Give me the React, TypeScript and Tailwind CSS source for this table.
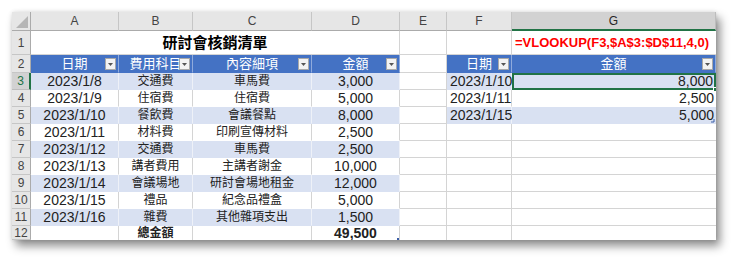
import React from "react";

const rows: string[][] = [
  ["2023/1/8", "交通費", "車馬費", "3,000"],
  ["2023/1/9", "住宿費", "住宿費", "5,000"],
  ["2023/1/10", "餐飲費", "會議餐點", "8,000"],
  ["2023/1/11", "材料費", "印刷宣傳材料", "2,500"],
  ["2023/1/12", "交通費", "車馬費", "2,500"],
  ["2023/1/13", "講者費用", "主講者謝金", "10,000"],
  ["2023/1/14", "會議場地", "研討會場地租金", "12,000"],
  ["2023/1/15", "禮品", "紀念品禮盒", "5,000"],
  ["2023/1/16", "雜費", "其他雜項支出", "1,500"],
];

const lookup: string[][] = [
  ["2023/1/10", "8,000"],
  ["2023/1/11", "2,500"],
  ["2023/1/15", "5,000"],
];

function FilterBtn() {
  return (
    <div className="absolute right-[2px] top-[3px] w-[11px] h-[12px] bg-[#f3f3f3] border border-[#a9a9a9] flex items-center justify-center">
      <svg width="5" height="3" viewBox="0 0 5 3">
        <path d="M0 0 L5 0 L2.5 3 Z" fill="#555" />
      </svg>
    </div>
  );
}

function Hdr({ text }: { text: string }) {
  return (
    <div className="relative flex items-center justify-center bg-[#4472c4] border-r border-b border-r-[#8faadc] border-b-[#4472c4] text-white text-[13px]">
      <span>{text}</span>
      <FilterBtn />
    </div>
  );
}

function RowNum({ n, sel }: { n: number; sel?: boolean }) {
  return (
    <div
      className={
        sel
          ? "flex items-center justify-center bg-[#d2d2d2] border-b border-b-[#bdbdbd] border-r-2 border-r-[#217346] text-[12px] text-[#217346]"
          : "flex items-center justify-center bg-[#e6e6e6] border-b border-r border-b-[#c6c6c6] border-r-[#ababab] text-[12px] text-[#444]"
      }
    >
      {n}
    </div>
  );
}

export default function App() {
  const colHeads = ["A", "B", "C", "D", "E", "F", "G"];
  return (
    <div className="w-[740px] h-[264px] bg-white overflow-hidden pt-[12px] pl-[12px] font-['Liberation_Sans','Noto_Sans_CJK_TC',sans-serif]">
      <div className="w-[704px] h-[228px] shadow-[4px_6px_9px_rgba(0,0,0,0.45),0_0_4px_rgba(0,0,0,0.12)] bg-white">
        <div className="grid grid-cols-[19px_88px_74px_119px_88px_47px_65px_204px] grid-rows-[19px_24px_18px_repeat(9,17px)_14px] overflow-hidden h-[228px] text-[#222]">
          {/* Column header row */}
          <div className="relative bg-[#e6e6e6] border-r border-b border-[#ababab]">
            <svg className="absolute right-[2px] bottom-[2px]" width="12" height="12" viewBox="0 0 12 12">
              <path d="M12 0 L12 12 L0 12 Z" fill="#b5b5b5" />
            </svg>
          </div>
          {colHeads.map((c) =>
            c === "G" ? (
              <div key={c} className="flex items-center justify-center bg-[#d2d2d2] border-r border-r-[#bdbdbd] border-b-2 border-b-[#217346] text-[12px] text-[#262626]">
                {c}
              </div>
            ) : (
              <div key={c} className="flex items-center justify-center bg-[#e6e6e6] border-r border-b border-r-[#c6c6c6] border-b-[#ababab] text-[12px] text-[#444]">
                {c}
              </div>
            )
          )}

          {/* Row 1 */}
          <RowNum n={1} />
          <div className="col-span-4 flex items-center justify-center border-r border-b border-[#d4d4d4] text-[15px] font-bold text-black pt-[2px]">
            研討會核銷清單
          </div>
          <div className="border-r border-b border-[#d4d4d4]" />
          <div className="border-r border-b border-[#d4d4d4]" />
          <div className="flex items-center pl-[3px] border-b border-[#d4d4d4] text-[13px] font-bold text-[#ff0000] whitespace-nowrap overflow-visible">
            =VLOOKUP(F3,$A$3:$D$11,4,0)
          </div>

          {/* Row 2 */}
          <RowNum n={2} />
          <Hdr text="日期" />
          <Hdr text="費用科目" />
          <Hdr text="內容細項" />
          <Hdr text="金額" />
          <div className="border-r border-b border-[#d4d4d4]" />
          <Hdr text="日期" />
          <Hdr text="金額" />

          {/* Data rows 3-11 */}
          {rows.map((r, i) => {
            const band = i % 2 === 0;
            const cell = band
              ? "flex items-center justify-center bg-[#d9e1f2] border-r border-b border-r-[#eef1f8] border-b-[#d9e1f2] whitespace-nowrap"
              : "flex items-center justify-center bg-white border-r border-b border-r-[#d4d4d4] border-b-[#ffffff] whitespace-nowrap";
            const lk = lookup[i];
            const lband = i % 2 === 0;
            return (
              <React.Fragment key={i}>
                <RowNum n={i + 3} sel={i === 0} />
                <div className={cell + " text-[14px]"}>{r[0]}</div>
                <div className={cell + " text-[12px]"}>{r[1]}</div>
                <div className={cell + " text-[12px]"}>{r[2]}</div>
                <div className={cell + " text-[14px]"}>{r[3]}</div>
                <div className="border-r border-b border-[#d4d4d4]" />
                {lk ? (
                  <>
                    <div
                      className={
                        lband
                          ? "flex items-center pl-[3px] bg-[#d9e1f2] border-r border-b border-r-[#eef1f8] border-b-[#d9e1f2] text-[14px] whitespace-nowrap"
                          : "flex items-center pl-[3px] bg-white border-r border-b border-r-[#d4d4d4] border-b-white text-[14px] whitespace-nowrap"
                      }
                    >
                      {lk[0]}
                    </div>
                    {i === 0 ? (
                      <div className="relative flex items-center justify-end pr-[1px] bg-[#d9e1f2] border-2 border-[#217346] text-[14px]">
                        {lk[1]}
                        <div className="absolute right-[-4px] bottom-[-4px] w-[5px] h-[5px] bg-[#217346] border border-white" />
                      </div>
                    ) : (
                      <div
                        className={
                          lband
                            ? "relative flex items-center justify-end pr-[2px] bg-[#d9e1f2] text-[14px]"
                            : "flex items-center justify-end pr-[2px] bg-white text-[14px]"
                        }
                      >
                        {lk[1]}
                        {i === 2 && (
                          <svg className="absolute right-[1px] bottom-[1px]" width="4" height="4" viewBox="0 0 4 4">
                            <path d="M3 0 L3 3 L0 3" stroke="#3b5ea8" strokeWidth="1" fill="none" />
                          </svg>
                        )}
                      </div>
                    )}
                  </>
                ) : (
                  <>
                    <div className="border-r border-b border-[#d4d4d4]" />
                    <div className="border-b border-[#d4d4d4]" />
                  </>
                )}
              </React.Fragment>
            );
          })}

          {/* Row 12 */}
          <RowNum n={12} />
          <div className="border-r border-[#d4d4d4]" />
          <div className="flex items-start justify-center border-r border-[#d4d4d4] text-[12px] font-bold leading-[14px]">總金額</div>
          <div className="border-r border-[#d4d4d4]" />
          <div className="relative flex items-start justify-center border-r border-[#d4d4d4] text-[14px] font-bold leading-[14px]">
            49,500
            <div className="absolute right-0 bottom-0 w-[2px] h-[2px] bg-[#3b5ea8]" />
          </div>
          <div className="border-r border-[#d4d4d4]" />
          <div className="border-r border-[#d4d4d4]" />
          <div />
        </div>
      </div>
    </div>
  );
}
